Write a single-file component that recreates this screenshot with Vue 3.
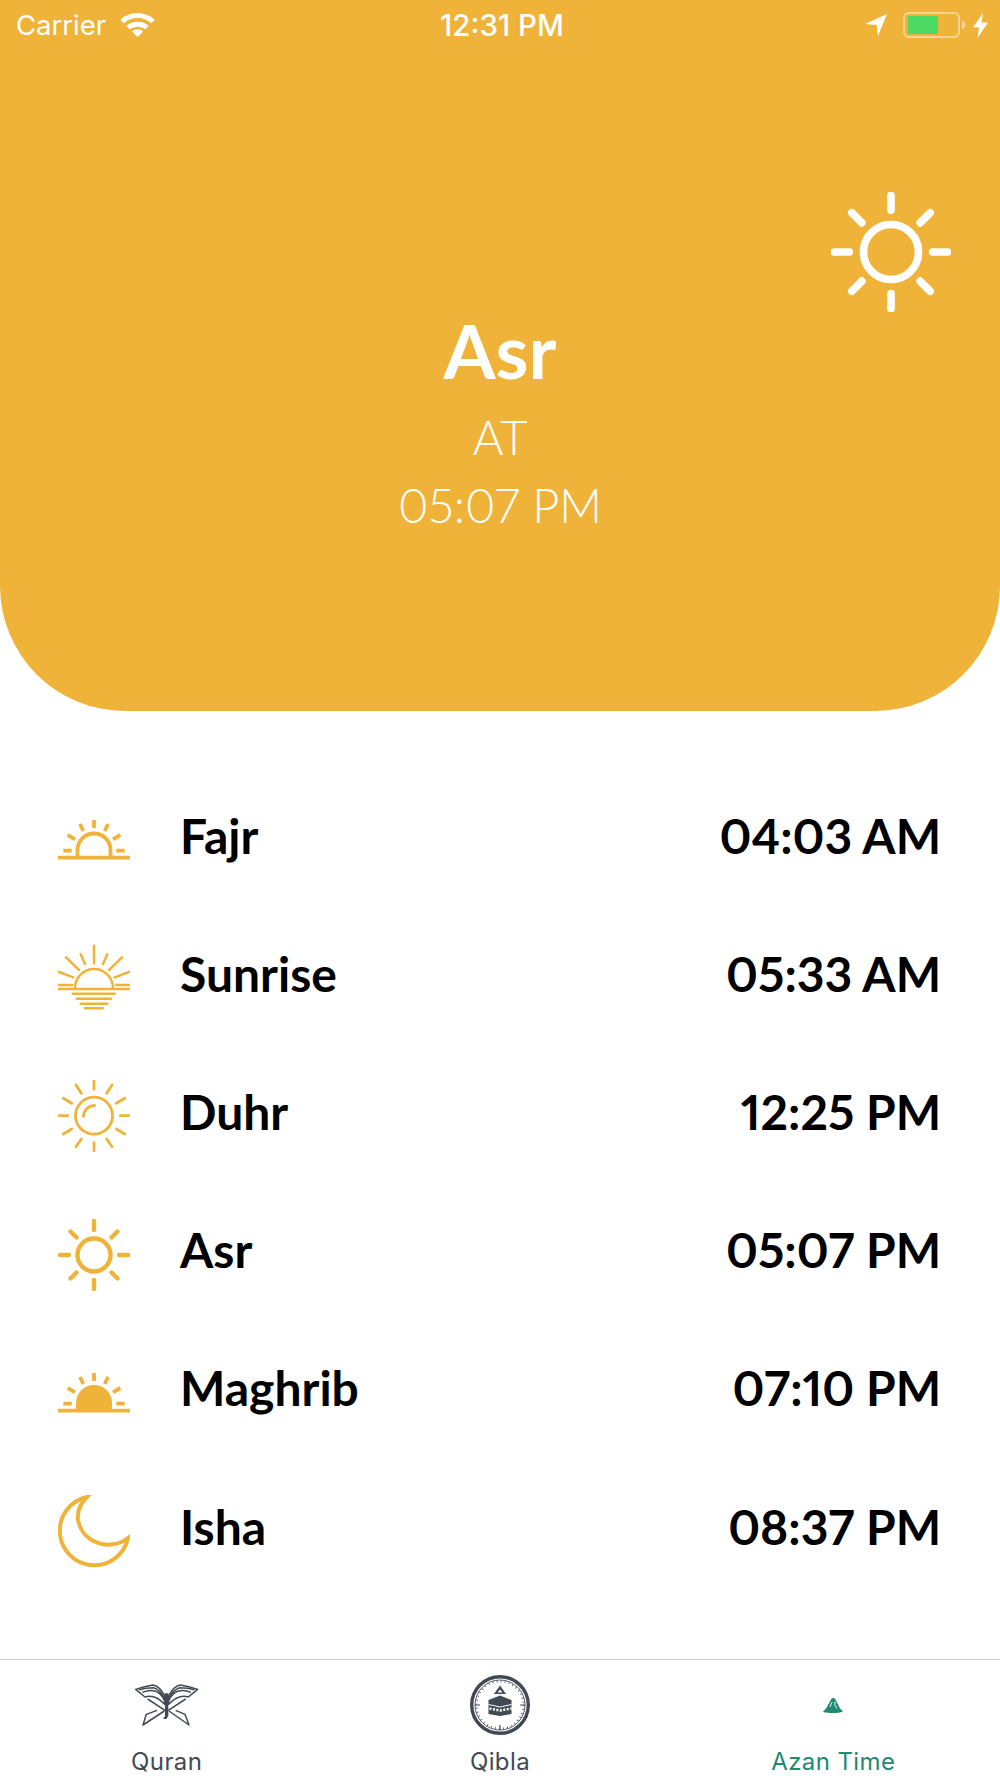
<template>
  <div class="screen">
    <header class="hero">
      <div class="status">
        <div class="status-left">
          <span>Carrier</span>
          <svg class="wifi" viewBox="0 0 35 24" width="35" height="24">
            <path d="M2 8.5C11 .5 24 .5 33 8.5" />
            <path d="M8 14.5C13 10 22 10 27 14.5" />
            <path class="wedge" d="M17.5 24L12 18.5C15 15.5 20 15.5 23 18.5Z" />
          </svg>
        </div>
        <span class="status-time">12:31 PM</span>
        <div class="status-right">
          <svg class="arrow" viewBox="0 0 22 22" width="22" height="22"><path d="M22 0L13 22 11.5 11 0 10Z" /></svg>
          <div class="battery"><div class="battery-level"></div></div>
          <div class="battery-nub"></div>
          <svg class="bolt" viewBox="0 0 15 25" width="15" height="25"><path d="M10 0L0 14.5H6L4.5 25 15 9.5H8.5Z" /></svg>
        </div>
      </div>
      <svg class="hero-sun" viewBox="0 0 72 72" width="120" height="120">
        <path :d="sunPath" />
      </svg>
      <div class="hero-name">Asr</div>
      <div class="hero-line hero-at">AT</div>
      <div class="hero-line">05:07 PM</div>
    </header>

    <ul class="times">
      <li class="time-row" v-for="prayer in prayers" :key="prayer.name">
        <svg class="row-icon" viewBox="0 0 72 72" width="72" height="72" :stroke-width="prayer.width" :stroke-linecap="prayer.cap">
          <path v-if="prayer.fill" class="solid" :d="prayer.fill" />
          <path :d="prayer.path" />
        </svg>
        <span class="row-name">{{ prayer.name }}</span>
        <span class="row-time">{{ prayer.time }}</span>
      </li>
    </ul>

    <nav class="tabs">
      <div class="tab">
        <div class="tab-icon">
          <svg viewBox="0 0 225 180" width="75" height="60" class="quran">
            <path d="M20 43C40 36 58 32 72 30C85 32 98 46 107 62V88C90 70 68 60 48 66Z" />
            <path d="M30 44C48 38 62 38 74 38C86 42 98 54 106 68M40 52C55 46 68 46 78 48C90 52 100 62 106 76" />
            <path d="M206 43C186 36 168 32 154 30C141 32 128 46 119 62V88C136 70 158 60 178 66Z" />
            <path d="M196 44C178 38 164 38 152 38C140 42 128 54 120 68M186 52C171 46 158 46 148 48C136 52 126 62 120 76" />
            <path d="M56 72L108 106M170 72L118 106M106 108L42 150L52 118L84 106M120 108L180 150L168 118L140 106" />
            <path class="spine" d="M108 55H118V122L112 132H104V126H108Z" />
          </svg>
        </div>
        <span class="tab-label">Quran</span>
      </div>
      <div class="tab">
        <div class="tab-icon">
          <svg viewBox="0 0 60 60" width="60" height="60" class="qibla">
            <circle class="ring" cx="30" cy="30" r="28.3" />
            <circle class="inner-ring" cx="30" cy="30" r="25" />
            <circle class="ticks" cx="30" cy="30" r="23.5" />
            <path class="cardinal" d="M5 30H10M50 30H55M30 50V55" />
            <path class="solid-dark" d="M30 10.5L36 19H24Z" />
            <path class="hole" d="M30 14.5L32.5 17.5H27.5Z" />
            <path class="solid-dark" d="M30 20.5L41.5 25V39L30 41 18.5 39V25Z" />
            <path class="band" d="M18.5 29.5L30 32 41.5 29.5" />
            <path class="band-dots" d="M19.5 33.5L30 35.5 41.5 33.5" />
          </svg>
        </div>
        <span class="tab-label">Qibla</span>
      </div>
      <div class="tab tab-active">
        <div class="tab-icon">
          <svg viewBox="0 0 20 16" width="20" height="16" class="azan">
            <path d="M0 14.5C2 13 3 11.5 4.5 9L8 2.5C9 .5 11.5 .5 12.5 2.5L16 9.5C17 11.5 18.5 13 20 14C19 15.5 15 16 10 16S1 15.5 0 14.5Z" />
            <path class="azan-mark" d="M9 5L7 10M12 4.5V8.5L14 11.5" />
          </svg>
        </div>
        <span class="tab-label">Azan Time</span>
      </div>
    </nav>
  </div>
</template>

<script setup>
const sunPath =
  'M36 2V11M36 61V70M2 36H11M61 36H70M12.5 12.5L18.5 18.5M59.5 12.5L53.5 18.5M12.5 59.5L18.5 53.5M59.5 59.5L53.5 53.5M19.5 36A16.5 16.5 0 1 0 52.5 36A16.5 16.5 0 1 0 19.5 36Z'

const horizonRays =
  'M36 16V24M22 20L25.3 27M50 20L46.7 27M9.7 31L17 35.3M62.3 31L55 35.3M5.3 46.7H13.7M58.3 46.7H66.7'

const prayers = [
  {
    name: 'Fajr',
    time: '04:03 AM',
    width: 3.8,
    cap: 'butt',
    path: horizonRays + 'M0 53.7H72M19.5 52V46A16.5 16.5 0 0 1 52.5 46V52'
  },
  {
    name: 'Sunrise',
    time: '05:33 AM',
    width: 2.5,
    cap: 'round',
    path:
      'M36 3.7V21.3M22.7 12.3L27 22M49.3 12.3L45 22M8 15.3L21 28M64 15.3L51 28M.3 29.7L15.3 35.3M71.7 29.7L56.7 35.3' +
      'M0 43H14M58 43H72M0 47H72M14.7 51.7H56.7M18.7 56.7H53M22.7 61.7H49.3M27 66.3H44.7M17 47V46A19 19 0 0 1 55 46V47'
  },
  {
    name: 'Duhr',
    time: '12:25 PM',
    width: 2.8,
    cap: 'round',
    path:
      'M36 1V9.3M36 62.7V70.7M1.3 35.7H9.7M62.3 35.7H70.7M18 5L23.3 13.3M54 5L48.7 13.3M5.3 18.3L13.7 23.3M66.7 18.3L58.3 23.3' +
      'M5.3 54L13.7 49M66.7 54L58.3 49M18 66.7L23.3 59M54 66.7L48.7 59M17.5 35.7A18.5 18.5 0 1 0 54.5 35.7A18.5 18.5 0 1 0 17.5 35.7Z' +
      'M25.5 36.5A11 11 0 0 1 36.5 25.5'
  },
  { name: 'Asr', time: '05:07 PM', width: 4.4, cap: 'round', path: sunPath },
  {
    name: 'Maghrib',
    time: '07:10 PM',
    width: 3.8,
    cap: 'butt',
    path: horizonRays + 'M0 53.7H72',
    fill: 'M18 53V46A18 18 0 0 1 54 46V53Z'
  },
  {
    name: 'Isha',
    time: '08:37 PM',
    width: 4,
    cap: 'round',
    path: 'M29 2A34.5 34.5 0 1 0 70 43C52 57 24 48 20 25C19 16 23 8 29 2Z'
  }
]
</script>

<style scoped>
.screen {
  position: relative;
  width: 1000px;
  height: 1778px;
  overflow: hidden;
  display: flex;
  flex-direction: column;
  background: #fff;
}

.hero {
  position: relative;
  height: 711px;
  flex: none;
  background: #f0b339;
  border-radius: 0 0 125px 125px;
  color: #fff;
  display: flex;
  flex-direction: column;
  align-items: center;
  font-family: Lato, sans-serif;
  font-feature-settings: "pnum";
}

.status {
  align-self: stretch;
  height: 50px;
  flex: none;
  padding: 0 12px 0 16px;
  display: grid;
  grid-template-columns: 1fr auto 1fr;
  align-items: center;
  font-family: Inter, sans-serif;
  font-size: 27.5px;
}

.status-left {
  display: flex;
  align-items: center;
  gap: 14px;
}

.status-time {
  font-size: 29.5px;
  font-weight: 500;
}

.status-right {
  display: flex;
  align-items: center;
  justify-content: flex-end;
}

.wifi path {
  fill: none;
  stroke: #fff;
  stroke-width: 5;
}

.wifi .wedge {
  fill: #fff;
  stroke: none;
}

.arrow,
.bolt {
  fill: #fff;
}

.battery {
  margin-left: 16px;
  width: 57px;
  height: 26px;
  box-sizing: border-box;
  border: 2px solid rgba(255, 255, 255, 0.45);
  border-radius: 6px;
  padding: 2px 3px;
}

.battery-level {
  width: 30px;
  height: 18px;
  background: #4cd964;
}

.battery-nub {
  width: 3px;
  height: 8px;
  margin-left: 2px;
  background: rgba(255, 255, 255, 0.45);
  border-radius: 0 3px 3px 0;
}

.bolt {
  margin-left: 8px;
}

.hero-sun {
  position: absolute;
  left: 831px;
  top: 192px;
  fill: none;
  stroke: #fff;
  stroke-width: 4.6;
  stroke-linecap: round;
}

.hero-name {
  margin-top: 256px;
  font-size: 75px;
  font-weight: 700;
  line-height: 88px;
}

.hero-line {
  font-size: 47px;
  font-weight: 300;
  line-height: 68px;
}

.hero-at {
  margin-top: 9px;
}

.times {
  list-style: none;
  margin: 0;
  padding: 55px 0 0;
  font-family: Lato, sans-serif;
  font-size: 48px;
  font-weight: 700;
  color: #000;
  font-feature-settings: "pnum";
}

.time-row {
  height: 138.2px;
  padding: 0 59px 0 58px;
  display: flex;
  align-items: center;
}

.row-icon {
  flex: none;
  margin-top: 10px;
  fill: none;
  stroke: #f0b339;
}

.solid {
  fill: #f0b339;
  stroke: none;
}

.row-name {
  margin-left: 50px;
}

.row-time {
  margin-left: auto;
}

.tabs {
  position: absolute;
  left: 0;
  right: 0;
  bottom: 0;
  height: 119px;
  box-sizing: border-box;
  border-top: 1.5px solid #cfcfcf;
  display: flex;
  font-family: Inter, sans-serif;
  font-size: 24px;
  color: #414a52;
}

.tab {
  flex: 1;
  display: flex;
  flex-direction: column;
  align-items: center;
}

.tab-active {
  color: #218a70;
}

.tab-icon {
  height: 88px;
  flex: none;
  display: flex;
  align-items: center;
  justify-content: center;
  padding-top: 2px;
  box-sizing: border-box;
}

.tab-label {
  line-height: 28px;
  letter-spacing: 0.4px;
}

.quran path {
  fill: none;
  stroke: #414a52;
  stroke-width: 4.5;
  stroke-linejoin: round;
}

.quran .spine {
  fill: #414a52;
  stroke: none;
}

.ring {
  fill: none;
  stroke: #414a52;
  stroke-width: 3.4;
}

.inner-ring {
  fill: none;
  stroke: #414a52;
  stroke-width: 0.9;
}

.ticks {
  fill: none;
  stroke: #414a52;
  stroke-width: 1.8;
  stroke-dasharray: 0.8 3.3;
}

.cardinal {
  fill: none;
  stroke: #414a52;
  stroke-width: 1.2;
}

.solid-dark {
  fill: #414a52;
}

.hole {
  fill: #fff;
}

.band {
  fill: none;
  stroke: #fff;
  stroke-width: 1;
}

.band-dots {
  fill: none;
  stroke: #fff;
  stroke-width: 2.5;
  stroke-dasharray: 2 1.5;
}

.azan {
  fill: #218a70;
}

.azan .azan-mark {
  fill: none;
  stroke: #fff;
  stroke-width: 0.9;
}
</style>

<style>
body {
  margin: 0;
}
</style>
